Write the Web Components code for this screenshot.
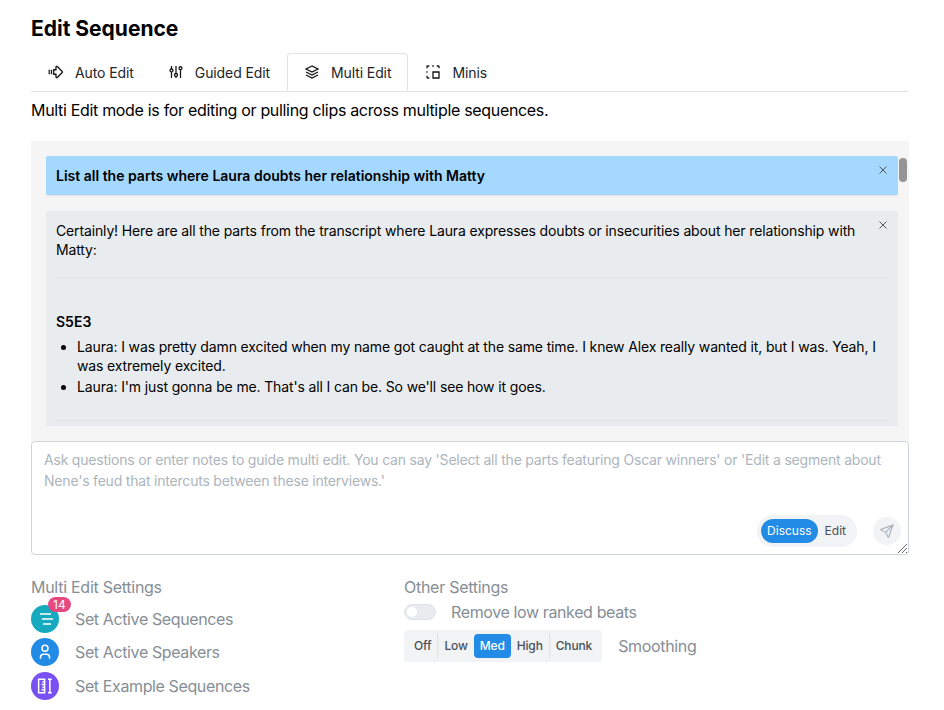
<!DOCTYPE html>
<html>
<head>
<meta charset="utf-8">
<style>
    html, body { margin: 0; height: 710px; overflow: hidden; background: #fff; }
    body { font-family: Inter, "Liberation Sans", sans-serif; color: #000; }
</style>
</head>
<body>
<edit-sequence></edit-sequence>

<script>
const ICONS = {
    auto: '<svg viewBox="0 0 24 24"><path d="M12 9V5.400a1 1 0 0 1 1.700-.700l6.600 6.600a1 1 0 0 1 0 1.400l-6.600 6.600a1 1 0 0 1-1.700-.700V15H9V9zM3 9v6M6 9v6"/></svg>',
    guided: '<svg viewBox="0 0 24 24"><path d="M4 10a2 2 0 1 0 4 0a2 2 0 0 0-4 0M6 4v4M6 12v8M10 16a2 2 0 1 0 4 0a2 2 0 0 0-4 0M12 4v10M12 18v2M16 7a2 2 0 1 0 4 0a2 2 0 0 0-4 0M18 4v1M18 9v11"/></svg>',
    multi: '<svg viewBox="0 0 24 24"><path d="M12 4 4 8l8 4 8-4zM4 12l8 4 8-4M4 16l8 4 8-4"/></svg>',
    minis: '<svg viewBox="0 0 24 24"><path d="M4 7V5a1 1 0 0 1 1-1h2M11 4h2M17 4h2a1 1 0 0 1 1 1v2M4 11v2M4 17v2a1 1 0 0 0 1 1h2M12 12h8v8h-8z"/></svg>',
    list: '<svg viewBox="0 0 24 24"><path d="M5.300 5.300H20M8 12h14.700M9.300 18.700H20"/></svg>',
    person: '<svg viewBox="0 0 24 24"><path d="M8 7a4 4 0 1 0 8 0a4 4 0 0 0-8 0M6 21v-2a4 4 0 0 1 4-4h4a4 4 0 0 1 4 4v2"/></svg>',
    example: '<svg viewBox="0 0 24 24"><path d="M3.500 3h8v18h-8zM11.500 6.500h-3M11.500 10h-4M11.500 13.500h-3M11.500 17h-4M16 3h5M16 21h5M18.500 3v18"/></svg>',
    send: '<svg viewBox="0 0 24 24"><path d="M10 14 21 3M21 3l-6.500 18a.55.55 0 0 1-1 0L10 14l-7-3.500a.55.55 0 0 1 0-1z"/></svg>',
    close: '<svg viewBox="0 0 10 10"><path d="M1.500 1.500l7 7M8.500 1.500l-7 7"/></svg>'
};

class TabItem extends HTMLElement {
    constructor() {
        super();
        this.attachShadow({mode: "open"});
        this.shadowRoot.innerHTML = `
            <style>
                :host { display: flex; align-items: center; gap: 10px; height: 38px; box-sizing: border-box;
                    padding: 0 16px; margin-bottom: -1px; font-size: 14px; letter-spacing: -0.1px; color: #212529;
                    border: 1px solid transparent; border-radius: 4px 4px 0 0; }
                :host([active]) { background: #fff; border-color: #dee2e6; border-bottom-color: #fff; }
                svg { width: 18px; height: 18px; margin-left: -1px; fill: none; stroke: #111; stroke-width: 1.7; display: block; }
            </style>
            ${ICONS[this.getAttribute('icon')]}<slot></slot>`;
    }
}
customElements.define('tab-item', TabItem);

class ChatCard extends HTMLElement {
    constructor() {
        super();
        this.attachShadow({mode: "open"});
        this.shadowRoot.innerHTML = `
            <style>
                :host { display: block; position: relative; box-sizing: border-box; padding: 10px; font-size: 14px;
                    line-height: 19px; letter-spacing: -0.14px; background: #e9ecef; color: #000; margin-bottom: 16px; }
                :host([user]) { background: #a5d8ff; font-weight: 600; height: 39px; letter-spacing: 0;
                    border-radius: 2px; box-shadow: 0 1px 2px rgba(0,0,0,.1); }
                .close { position: absolute; top: 9px; right: 10px; width: 10px; height: 10px; }
                svg { display: block; fill: none; stroke: #555; stroke-width: 1; }
            </style>
            <div class="close">${ICONS.close}</div>
            <slot></slot>`;
    }
}
customElements.define('chat-card', ChatCard);

class ChatPanel extends HTMLElement {
    constructor() {
        super();
        this.attachShadow({mode: "open"});
        this.shadowRoot.innerHTML = `
            <style>
                :host { display: block; position: relative; height: 300px; background: #f5f5f5;
                    box-sizing: border-box; padding: 15px 11px 15px 15px; }
                .scroller { height: 100%; overflow: hidden; }
                .thumb { position: absolute; top: 17px; right: 2px; width: 8px; height: 24px; border-radius: 4px; background: #959595; }
                .answer { height: 300px; }
                p { margin: 0; }
                hr { border: 0; border-top: 1px solid #dee2e6; margin: 0; }
                .first { margin-bottom: 18px; padding-right: 10px; }
                .rule { margin-bottom: 34px; }
                h4 { font-size: 14px; font-weight: 600; line-height: 19px; margin: 0 0 6px; letter-spacing: 0; }
                ul { margin: 0 0 24px; padding-left: 21px; }
                li { margin-bottom: 2px; }
            </style>
            <div class="scroller">
                <chat-card user>List all the parts where Laura doubts her relationship with Matty</chat-card>
                <chat-card class="answer">
                    <p class="first">Certainly! Here are all the parts from the transcript where Laura expresses doubts or insecurities about her relationship with Matty:</p>
                    <hr class="rule">
                    <h4>S5E3</h4>
                    <ul>
                        <li>Laura: I was pretty damn excited when my name got caught at the same time. I knew Alex really wanted it, but I was. Yeah, I was extremely excited.</li>
                        <li>Laura: I'm just gonna be me. That's all I can be. So we'll see how it goes.</li>
                    </ul>
                    <hr>
                </chat-card>
            </div>
            <div class="thumb"></div>`;
    }
}
customElements.define('chat-panel', ChatPanel);

class PromptBox extends HTMLElement {
    constructor() {
        super();
        this.attachShadow({mode: "open"});
        this.shadowRoot.innerHTML = `
            <style>
                :host { display: flex; flex-direction: column; justify-content: space-between; box-sizing: border-box;
                    height: 114px; border: 1px solid #ced4da; border-radius: 4px; padding: 7px 7px 7px 12px;
                    position: relative; font-size: 14px; line-height: 21px; color: #adb5bd; background: #fff; }
                .text { letter-spacing: -0.2px; }
                .bar { display: flex; justify-content: flex-end; align-items: center; gap: 16px; }
                .toggle { display: flex; align-items: center; height: 32px; box-sizing: border-box; padding: 0 4px; background: #f1f3f5;
                    border-radius: 16px; font-size: 12px; color: #495057; }
                .toggle span { padding: 0 7px; line-height: 24px; }
                .toggle .on { padding: 0 6px; background: #228be6; color: #fff; border-radius: 12px; }
                .send { width: 28px; height: 28px; border-radius: 50%; background: #f1f3f5; display: flex; align-items: center; justify-content: center; }
                .send svg { width: 16px; height: 16px; fill: none; stroke: #adb5bd; stroke-width: 1.8; }
                .grip { position: absolute; right: 1px; bottom: 1px; width: 9px; height: 9px; }
                .grip svg { display: block; stroke: #666; stroke-width: 1; }
            </style>
            <div class="text"><slot></slot></div>
            <div class="bar">
                <div class="toggle"><span class="on">Discuss</span><span>Edit</span></div>
                <div class="send">${ICONS.send}</div>
            </div>
            <div class="grip"><svg viewBox="0 0 9 9"><path d="M0 9 9 0M4 9l5-5M8 9l1-1"/></svg></div>`;
    }
}
customElements.define('prompt-box', PromptBox);

class SettingRow extends HTMLElement {
    constructor() {
        super();
        this.attachShadow({mode: "open"});
        const badge = this.getAttribute('badge');
        this.shadowRoot.innerHTML = `
            <style>
                :host { display: flex; align-items: center; gap: 16px; height: 28px; font-size: 16px; letter-spacing: -0.38px; color: #868e96; }
                .dot { position: relative; width: 28px; height: 28px; border-radius: 50%; display: flex; align-items: center;
                    justify-content: center; background: var(--dot); flex: none; }
                svg { width: 18px; height: 18px; fill: none; stroke: #fff; stroke-width: 2; }
                .badge { position: absolute; top: -8px; left: 17px; height: 15px; padding: 0 5px; border-radius: 8px; background: #e64980;
                    color: #fff; font-size: 12px; line-height: 15px; letter-spacing: 0; }
            </style>
            <div class="dot">${ICONS[this.getAttribute('icon')]}${badge ? `<span class="badge">${badge}</span>` : ''}</div>
            <slot></slot>`;
    }
}
customElements.define('setting-row', SettingRow);

class SmoothingControl extends HTMLElement {
    constructor() {
        super();
        this.attachShadow({mode: "open"});
        this.shadowRoot.innerHTML = `
            <style>
                :host { display: flex; align-items: center; gap: 16px; font-size: 16px; letter-spacing: -0.33px; color: #868e96; }
                .seg { display: flex; align-items: center; height: 32px; box-sizing: border-box; padding: 4px; background: #f1f3f5; border-radius: 4px;
                    font-size: 12px; font-weight: 500; letter-spacing: -0.15px; color: #495057; }
                .seg span { padding: 0 6px; line-height: 24px; border-left: 1px solid #dee2e6; height: 24px; }
                .seg span:first-child { border-left: 0; }
                .seg .on { background: #228be6; color: #fff; border-radius: 4px; border-left: 0; }
                .seg .on + span { border-left: 0; }
            </style>
            <div class="seg"><span>Off</span><span>Low</span><span class="on">Med</span><span>High</span><span>Chunk</span></div>
            <slot></slot>`;
    }
}
customElements.define('smoothing-control', SmoothingControl);

class SwitchRow extends HTMLElement {
    constructor() {
        super();
        this.attachShadow({mode: "open"});
        this.shadowRoot.innerHTML = `
            <style>
                :host { display: flex; align-items: center; gap: 15px; height: 16px; font-size: 16px; letter-spacing: -0.38px; color: #868e96; }
                .track { width: 32px; height: 16px; border-radius: 8px; background: #e9ecef; border: 1px solid #dee2e6; box-sizing: border-box; position: relative; }
                .track::after { content: ""; position: absolute; left: 2px; top: 2px; width: 10px; height: 10px; border-radius: 50%; background: #fff; }
            </style>
            <div class="track"></div><slot></slot>`;
    }
}
customElements.define('switch-row', SwitchRow);

class EditSequence extends HTMLElement {
    constructor() {
        super();
        this.attachShadow({mode: "open"});
        this.shadowRoot.innerHTML = `
            <style>
                :host { display: block; padding: 16px 35px 0 31px; }
                h1 { font-size: 21px; line-height: 26px; font-weight: 700; margin: 0 0 11px; }
                .tabs { display: flex; border-bottom: 1px solid #dee2e6; height: 38px; }
                .intro { font-size: 16px; line-height: 24px; letter-spacing: -0.32px; margin: 6px 0 19px; }
                .settings { display: flex; margin-top: 21px; }
                .left { width: 373px; display: flex; flex-direction: column; gap: 5.500px; }
                .right { display: flex; flex-direction: column; }
                .label { font-size: 16px; line-height: 22px; letter-spacing: -0.27px; color: #868e96; margin-bottom: 1px; }
                switch-row { margin: 5px 0 10px; }
            </style>
            <h1>Edit Sequence</h1>
            <div class="tabs">
                <tab-item icon="auto">Auto Edit</tab-item>
                <tab-item icon="guided">Guided Edit</tab-item>
                <tab-item icon="multi" active>Multi Edit</tab-item>
                <tab-item icon="minis">Minis</tab-item>
            </div>
            <div class="intro">Multi Edit mode is for editing or pulling clips across multiple sequences.</div>
            <chat-panel></chat-panel>
            <prompt-box>Ask questions or enter notes to guide multi edit. You can say 'Select all the parts featuring Oscar winners' or 'Edit a segment about Nene's feud that intercuts between these interviews.'</prompt-box>
            <div class="settings">
                <div class="left">
                    <div class="label">Multi Edit Settings</div>
                    <setting-row icon="list" badge="14" style="--dot:#15aabf">Set Active Sequences</setting-row>
                    <setting-row icon="person" style="--dot:#228be6">Set Active Speakers</setting-row>
                    <setting-row icon="example" style="--dot:#7950f2">Set Example Sequences</setting-row>
                </div>
                <div class="right">
                    <div class="label">Other Settings</div>
                    <switch-row>Remove low ranked beats</switch-row>
                    <smoothing-control>Smoothing</smoothing-control>
                </div>
            </div>`;
    }
}
customElements.define('edit-sequence', EditSequence);
</script>
</body>
</html>
